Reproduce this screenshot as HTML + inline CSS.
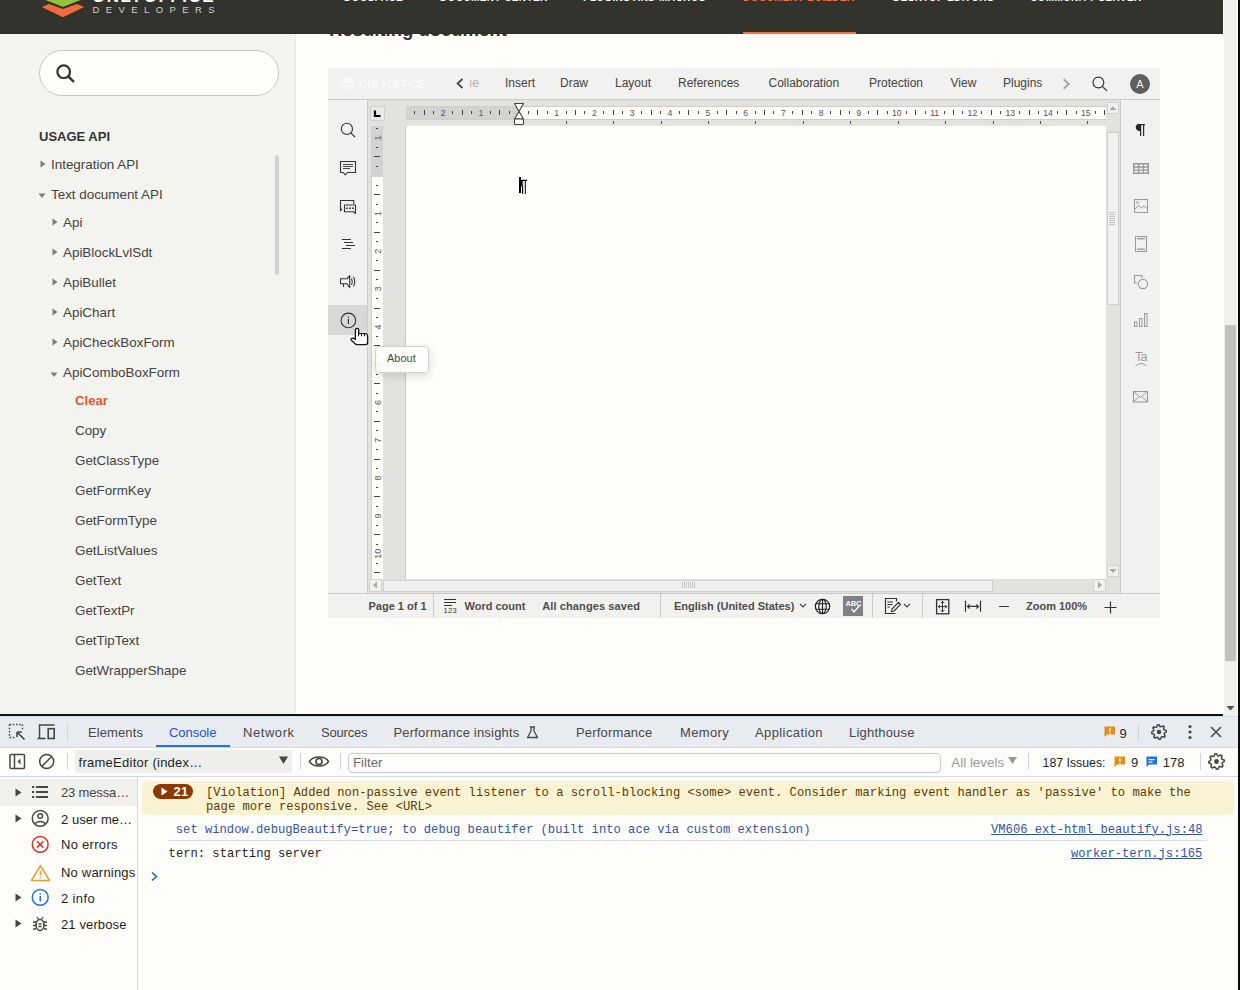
<!DOCTYPE html>
<html><head><meta charset="utf-8"><title>ONLYOFFICE API</title>
<style>
html,body{margin:0;padding:0;width:1240px;height:990px;overflow:hidden;background:#fefdf9;}
.t{position:absolute;white-space:pre;}
.r{position:absolute;display:block;}
</style></head><body>
<div class="t" style="left:329px;top:21.24px;font-size:18.5px;line-height:18.5px;color:#333330;font-weight:bold;font-family:'Liberation Sans', sans-serif;">Resulting document</div>
<div class="r" style="left:0px;top:0px;width:1223px;height:34px;background:#33332e;"></div>
<div class="r" style="left:0px;top:33px;width:1223px;height:1px;background:#2b2b27;"></div>
<svg class="r" style="left:40px;top:0px;" width="48" height="20" viewBox="0 0 48 20">
<path d="M2.3,7.3 Q2,6.9 3,6.6 L9,4 L23,9 L37,4 L43,6.6 Q44,6.9 43.7,7.3 L24,16.8 Q23,17.3 22,16.8 Z" fill="#f26b3a"/>
<path d="M5.5,0 L22,6.6 Q23,7 24,6.6 L40.5,0 Z" fill="#95c43d"/>
</svg>
<div class="t" style="left:92px;top:-12.39px;font-size:17px;line-height:17px;color:#ffffff;font-weight:bold;font-family:'Liberation Sans', sans-serif;letter-spacing:1.5px;">ONLYOFFICE</div>
<div class="t" style="left:92.5px;top:5.16px;font-size:9.5px;line-height:9.5px;color:#d2d2cc;font-weight:normal;font-family:'Liberation Sans', sans-serif;letter-spacing:6.4px;">DEVELOPERS</div>
<div class="t" style="left:344px;top:-7.37px;font-size:10px;line-height:10px;color:#ffffff;font-weight:bold;font-family:'Liberation Sans', sans-serif;letter-spacing:0.4px;">DOCSPACE</div>
<div class="t" style="left:440px;top:-7.37px;font-size:10px;line-height:10px;color:#ffffff;font-weight:bold;font-family:'Liberation Sans', sans-serif;letter-spacing:0.4px;">DOCUMENT CENTER</div>
<div class="t" style="left:583px;top:-7.37px;font-size:10px;line-height:10px;color:#ffffff;font-weight:bold;font-family:'Liberation Sans', sans-serif;letter-spacing:0.4px;">PLUGINS AND MACROS</div>
<div class="t" style="left:743px;top:-7.37px;font-size:10px;line-height:10px;color:#ff6f3d;font-weight:bold;font-family:'Liberation Sans', sans-serif;letter-spacing:0.4px;">DOCUMENT BUILDER</div>
<div class="t" style="left:893px;top:-7.37px;font-size:10px;line-height:10px;color:#ffffff;font-weight:bold;font-family:'Liberation Sans', sans-serif;letter-spacing:0.4px;">DESKTOP EDITORS</div>
<div class="t" style="left:1030px;top:-7.37px;font-size:10px;line-height:10px;color:#ffffff;font-weight:bold;font-family:'Liberation Sans', sans-serif;letter-spacing:0.4px;">COMMUNITY SERVER</div>
<div class="r" style="left:743px;top:32px;width:113px;height:2px;background:#ff6f3d;"></div>
<div class="r" style="left:1223px;top:0px;width:15px;height:717px;background:#fefdf9;"></div>
<div class="r" style="left:1224px;top:0px;width:13px;height:717px;background:#efefeb;"></div>
<div class="r" style="left:1225px;top:325px;width:11px;height:336px;background:#c1c1bd;"></div>
<svg class="r" style="left:1226px;top:704px;" width="10" height="8" viewBox="0 0 10 8"><path d="M0.5,2 L8.5,2 L4.5,6.5 Z" fill="#505050"/></svg>
<div class="r" style="left:1238px;top:0px;width:2px;height:990px;background:#0a0a0a;"></div>
<div class="r" style="left:0px;top:34px;width:296px;height:680px;background:#f3f3ef;"></div>
<div class="r" style="left:295px;top:34px;width:1px;height:680px;background:#e7e7e3;"></div>
<div class="r" style="left:39px;top:50px;width:240px;height:46px;background:#fefdf9;box-sizing:border-box;border:1px solid #c6c6c2;border-radius:23px;"></div>
<svg class="r" style="left:55px;top:63px;" width="22" height="22" viewBox="0 0 22 22"><circle cx="8.7" cy="8.7" r="6.3" fill="none" stroke="#333" stroke-width="2.2"/><path d="M13.3,13.3 L18.3,18.3" stroke="#333" stroke-width="2.4" stroke-linecap="round"/></svg>
<div class="t" style="left:39px;top:130.00px;font-size:13px;line-height:13px;color:#333;font-weight:bold;font-family:'Liberation Sans', sans-serif;">USAGE API</div>
<div class="r" style="left:275px;top:155px;width:4px;height:120px;background:#d0d3d6;border-radius:2px;"></div>
<svg class="r" style="left:39.5px;top:159.8px;" width="6" height="8" viewBox="0 0 6 8"><path d="M0.5,0.5 L5.5,4 L0.5,7.5 Z" fill="#7c7c78"/></svg>
<div class="t" style="left:51px;top:157.66px;font-size:13.4px;line-height:13.4px;color:#444440;font-weight:normal;font-family:'Liberation Sans', sans-serif;">Integration API</div>
<svg class="r" style="left:37.6px;top:193px;" width="8" height="6" viewBox="0 0 8 6"><path d="M0.5,0.5 L7.5,0.5 L4,5 Z" fill="#7c7c78"/></svg>
<div class="t" style="left:51px;top:187.66px;font-size:13.4px;line-height:13.4px;color:#444440;font-weight:normal;font-family:'Liberation Sans', sans-serif;">Text document API</div>
<svg class="r" style="left:52px;top:217.8px;" width="6" height="8" viewBox="0 0 6 8"><path d="M0.5,0.5 L5.5,4 L0.5,7.5 Z" fill="#7c7c78"/></svg>
<div class="t" style="left:63px;top:215.66px;font-size:13.4px;line-height:13.4px;color:#444440;font-weight:normal;font-family:'Liberation Sans', sans-serif;">Api</div>
<svg class="r" style="left:52px;top:247.8px;" width="6" height="8" viewBox="0 0 6 8"><path d="M0.5,0.5 L5.5,4 L0.5,7.5 Z" fill="#7c7c78"/></svg>
<div class="t" style="left:63px;top:245.66px;font-size:13.4px;line-height:13.4px;color:#444440;font-weight:normal;font-family:'Liberation Sans', sans-serif;">ApiBlockLvlSdt</div>
<svg class="r" style="left:52px;top:277.8px;" width="6" height="8" viewBox="0 0 6 8"><path d="M0.5,0.5 L5.5,4 L0.5,7.5 Z" fill="#7c7c78"/></svg>
<div class="t" style="left:63px;top:275.66px;font-size:13.4px;line-height:13.4px;color:#444440;font-weight:normal;font-family:'Liberation Sans', sans-serif;">ApiBullet</div>
<svg class="r" style="left:52px;top:307.8px;" width="6" height="8" viewBox="0 0 6 8"><path d="M0.5,0.5 L5.5,4 L0.5,7.5 Z" fill="#7c7c78"/></svg>
<div class="t" style="left:63px;top:305.66px;font-size:13.4px;line-height:13.4px;color:#444440;font-weight:normal;font-family:'Liberation Sans', sans-serif;">ApiChart</div>
<svg class="r" style="left:52px;top:337.8px;" width="6" height="8" viewBox="0 0 6 8"><path d="M0.5,0.5 L5.5,4 L0.5,7.5 Z" fill="#7c7c78"/></svg>
<div class="t" style="left:63px;top:335.66px;font-size:13.4px;line-height:13.4px;color:#444440;font-weight:normal;font-family:'Liberation Sans', sans-serif;">ApiCheckBoxForm</div>
<svg class="r" style="left:50px;top:372.4px;" width="8" height="6" viewBox="0 0 8 6"><path d="M0.5,0.5 L7.5,0.5 L4,5 Z" fill="#7c7c78"/></svg>
<div class="t" style="left:63px;top:365.66px;font-size:13.4px;line-height:13.4px;color:#444440;font-weight:normal;font-family:'Liberation Sans', sans-serif;">ApiComboBoxForm</div>
<div class="t" style="left:75px;top:393.83px;font-size:13.2px;line-height:13.2px;color:#e2582c;font-weight:bold;font-family:'Liberation Sans', sans-serif;">Clear</div>
<div class="t" style="left:75px;top:423.66px;font-size:13.4px;line-height:13.4px;color:#444440;font-weight:normal;font-family:'Liberation Sans', sans-serif;">Copy</div>
<div class="t" style="left:75px;top:453.66px;font-size:13.4px;line-height:13.4px;color:#444440;font-weight:normal;font-family:'Liberation Sans', sans-serif;">GetClassType</div>
<div class="t" style="left:75px;top:483.66px;font-size:13.4px;line-height:13.4px;color:#444440;font-weight:normal;font-family:'Liberation Sans', sans-serif;">GetFormKey</div>
<div class="t" style="left:75px;top:513.66px;font-size:13.4px;line-height:13.4px;color:#444440;font-weight:normal;font-family:'Liberation Sans', sans-serif;">GetFormType</div>
<div class="t" style="left:75px;top:543.66px;font-size:13.4px;line-height:13.4px;color:#444440;font-weight:normal;font-family:'Liberation Sans', sans-serif;">GetListValues</div>
<div class="t" style="left:75px;top:573.66px;font-size:13.4px;line-height:13.4px;color:#444440;font-weight:normal;font-family:'Liberation Sans', sans-serif;">GetText</div>
<div class="t" style="left:75px;top:603.66px;font-size:13.4px;line-height:13.4px;color:#444440;font-weight:normal;font-family:'Liberation Sans', sans-serif;">GetTextPr</div>
<div class="t" style="left:75px;top:633.66px;font-size:13.4px;line-height:13.4px;color:#444440;font-weight:normal;font-family:'Liberation Sans', sans-serif;">GetTipText</div>
<div class="t" style="left:75px;top:663.66px;font-size:13.4px;line-height:13.4px;color:#444440;font-weight:normal;font-family:'Liberation Sans', sans-serif;">GetWrapperShape</div>
<div class="r" style="left:0px;top:714px;width:1223px;height:2px;background:#111111;"></div>
<div class="r" style="left:328px;top:68px;width:832px;height:31px;background:#f1f1ef;"></div>
<div class="r" style="left:328px;top:99px;width:832px;height:1px;background:#cbcbc9;"></div>
<div class="r" style="left:328px;top:100px;width:39px;height:494px;background:#f1f1ef;"></div>
<div class="r" style="left:367px;top:100px;width:1px;height:494px;background:#cbcbc9;"></div>
<div class="r" style="left:368px;top:100px;width:752px;height:493px;background:#e2e2df;"></div>
<div class="r" style="left:1120px;top:100px;width:1px;height:494px;background:#cbcbc9;"></div>
<div class="r" style="left:1121px;top:100px;width:39px;height:494px;background:#f1f1ef;"></div>
<div class="r" style="left:328px;top:593px;width:832px;height:1px;background:#cbcbc9;"></div>
<div class="r" style="left:328px;top:594px;width:832px;height:24px;background:#f1f1ef;"></div>
<svg class="r" style="left:339px;top:76px;" width="17" height="16" viewBox="0 0 17 16"><path d="M8.3,1 L16,4.6 L8.3,8.2 L0.6,4.6 Z" fill="#fafaf8"/><path d="M0.8,8 L8.3,11.5 L15.8,8 M0.8,11 L8.3,14.5 L15.8,11" fill="none" stroke="#fafaf8" stroke-width="1.5"/></svg>
<div class="t" style="left:359px;top:78.69px;font-size:11px;line-height:11px;color:#fafaf8;font-weight:bold;font-family:'Liberation Sans', sans-serif;letter-spacing:-0.4px;">ONLYOFFICE</div>
<svg class="r" style="left:455px;top:78px;" width="10" height="12" viewBox="0 0 10 12"><path d="M7.5,1 L2.5,5.5 L7.5,10" fill="none" stroke="#444" stroke-width="1.7"/></svg>
<div class="t" style="left:469px;top:76.84px;font-size:12px;line-height:12px;color:#b0b0ae;font-weight:normal;font-family:'Liberation Sans', sans-serif;">ıe</div>
<div class="t" style="left:505px;top:76.84px;font-size:12px;line-height:12px;color:#444442;font-weight:normal;font-family:'Liberation Sans', sans-serif;">Insert</div>
<div class="t" style="left:560px;top:76.84px;font-size:12px;line-height:12px;color:#444442;font-weight:normal;font-family:'Liberation Sans', sans-serif;">Draw</div>
<div class="t" style="left:615px;top:76.84px;font-size:12px;line-height:12px;color:#444442;font-weight:normal;font-family:'Liberation Sans', sans-serif;">Layout</div>
<div class="t" style="left:678px;top:76.84px;font-size:12px;line-height:12px;color:#444442;font-weight:normal;font-family:'Liberation Sans', sans-serif;">References</div>
<div class="t" style="left:768.5px;top:76.84px;font-size:12px;line-height:12px;color:#444442;font-weight:normal;font-family:'Liberation Sans', sans-serif;">Collaboration</div>
<div class="t" style="left:869px;top:76.84px;font-size:12px;line-height:12px;color:#444442;font-weight:normal;font-family:'Liberation Sans', sans-serif;">Protection</div>
<div class="t" style="left:950.5px;top:76.84px;font-size:12px;line-height:12px;color:#444442;font-weight:normal;font-family:'Liberation Sans', sans-serif;">View</div>
<div class="t" style="left:1003px;top:76.84px;font-size:12px;line-height:12px;color:#444442;font-weight:normal;font-family:'Liberation Sans', sans-serif;">Plugins</div>
<svg class="r" style="left:1061px;top:77px;" width="12" height="14" viewBox="0 0 12 14"><path d="M2.6,2.2 L7.8,7 L2.6,11.8" fill="none" stroke="#a6a6a4" stroke-width="1.9"/></svg>
<svg class="r" style="left:1090px;top:75px;" width="20" height="18" viewBox="0 0 20 18"><circle cx="8.4" cy="7.5" r="5.4" fill="none" stroke="#333" stroke-width="1.15"/><path d="M12.2,11.4 L16.9,15.8" stroke="#333" stroke-width="1.2"/></svg>
<svg class="r" style="left:1130px;top:74px;" width="20" height="20" viewBox="0 0 20 20"><circle cx="10" cy="10" r="10" fill="#5e5e5c"/></svg>
<div class="t" style="left:1136.2px;top:78.69px;font-size:11px;line-height:11px;color:#f5f5f3;font-weight:normal;font-family:'Liberation Sans', sans-serif;">A</div>
<div class="r" style="left:370px;top:106px;width:15px;height:15px;background:#e9e9e7;box-sizing:border-box;border:1px solid #d0d0ce;"></div>
<svg class="r" style="left:373px;top:109px;" width="9" height="9" viewBox="0 0 9 9"><path d="M2,1.5 L2,7 L7.5,7" fill="none" stroke="#000" stroke-width="2.2"/></svg>
<div class="r" style="left:406px;top:106px;width:700px;height:14px;background:#fefdf9;"></div>
<div class="r" style="left:406px;top:106px;width:113px;height:14px;background:#d2d2d0;"></div>
<div class="r" style="left:406px;top:106px;width:700px;height:1px;background:#cdcdcb;"></div>
<div class="r" style="left:406px;top:119px;width:700px;height:1px;background:#cdcdcb;"></div>
<svg class="r" style="left:406px;top:106px;" width="700" height="14" viewBox="0 0 700 14"><rect x="8" y="5" width="1" height="3" fill="#444"/><rect x="18" y="4" width="1" height="5" fill="#444"/><rect x="27" y="5" width="1" height="3" fill="#444"/><text x="37.20" y="9.6" font-size="8.6" text-anchor="middle" fill="#555" font-family="Liberation Sans">2</text><rect x="46" y="5" width="1" height="3" fill="#444"/><rect x="56" y="4" width="1" height="5" fill="#444"/><rect x="65" y="5" width="1" height="3" fill="#444"/><text x="75.00" y="9.6" font-size="8.6" text-anchor="middle" fill="#555" font-family="Liberation Sans">1</text><rect x="84" y="5" width="1" height="3" fill="#444"/><rect x="93" y="4" width="1" height="5" fill="#444"/><rect x="103" y="5" width="1" height="3" fill="#444"/><rect x="122" y="5" width="1" height="3" fill="#444"/><rect x="131" y="4" width="1" height="5" fill="#444"/><rect x="141" y="5" width="1" height="3" fill="#444"/><text x="150.60" y="9.6" font-size="8.6" text-anchor="middle" fill="#555" font-family="Liberation Sans">1</text><rect x="160" y="5" width="1" height="3" fill="#444"/><rect x="169" y="4" width="1" height="5" fill="#444"/><rect x="178" y="5" width="1" height="3" fill="#444"/><text x="188.40" y="9.6" font-size="8.6" text-anchor="middle" fill="#555" font-family="Liberation Sans">2</text><rect x="197" y="5" width="1" height="3" fill="#444"/><rect x="207" y="4" width="1" height="5" fill="#444"/><rect x="216" y="5" width="1" height="3" fill="#444"/><text x="226.20" y="9.6" font-size="8.6" text-anchor="middle" fill="#555" font-family="Liberation Sans">3</text><rect x="235" y="5" width="1" height="3" fill="#444"/><rect x="245" y="4" width="1" height="5" fill="#444"/><rect x="254" y="5" width="1" height="3" fill="#444"/><text x="264.00" y="9.6" font-size="8.6" text-anchor="middle" fill="#555" font-family="Liberation Sans">4</text><rect x="273" y="5" width="1" height="3" fill="#444"/><rect x="282" y="4" width="1" height="5" fill="#444"/><rect x="292" y="5" width="1" height="3" fill="#444"/><text x="301.80" y="9.6" font-size="8.6" text-anchor="middle" fill="#555" font-family="Liberation Sans">5</text><rect x="311" y="5" width="1" height="3" fill="#444"/><rect x="320" y="4" width="1" height="5" fill="#444"/><rect x="330" y="5" width="1" height="3" fill="#444"/><text x="339.60" y="9.6" font-size="8.6" text-anchor="middle" fill="#555" font-family="Liberation Sans">6</text><rect x="349" y="5" width="1" height="3" fill="#444"/><rect x="358" y="4" width="1" height="5" fill="#444"/><rect x="367" y="5" width="1" height="3" fill="#444"/><text x="377.40" y="9.6" font-size="8.6" text-anchor="middle" fill="#555" font-family="Liberation Sans">7</text><rect x="386" y="5" width="1" height="3" fill="#444"/><rect x="396" y="4" width="1" height="5" fill="#444"/><rect x="405" y="5" width="1" height="3" fill="#444"/><text x="415.20" y="9.6" font-size="8.6" text-anchor="middle" fill="#555" font-family="Liberation Sans">8</text><rect x="424" y="5" width="1" height="3" fill="#444"/><rect x="434" y="4" width="1" height="5" fill="#444"/><rect x="443" y="5" width="1" height="3" fill="#444"/><text x="453.00" y="9.6" font-size="8.6" text-anchor="middle" fill="#555" font-family="Liberation Sans">9</text><rect x="462" y="5" width="1" height="3" fill="#444"/><rect x="471" y="4" width="1" height="5" fill="#444"/><rect x="481" y="5" width="1" height="3" fill="#444"/><text x="490.80" y="9.6" font-size="8.6" text-anchor="middle" fill="#555" font-family="Liberation Sans">10</text><rect x="500" y="5" width="1" height="3" fill="#444"/><rect x="509" y="4" width="1" height="5" fill="#444"/><rect x="519" y="5" width="1" height="3" fill="#444"/><text x="528.60" y="9.6" font-size="8.6" text-anchor="middle" fill="#555" font-family="Liberation Sans">11</text><rect x="538" y="5" width="1" height="3" fill="#444"/><rect x="547" y="4" width="1" height="5" fill="#444"/><rect x="556" y="5" width="1" height="3" fill="#444"/><text x="566.40" y="9.6" font-size="8.6" text-anchor="middle" fill="#555" font-family="Liberation Sans">12</text><rect x="575" y="5" width="1" height="3" fill="#444"/><rect x="585" y="4" width="1" height="5" fill="#444"/><rect x="594" y="5" width="1" height="3" fill="#444"/><text x="604.20" y="9.6" font-size="8.6" text-anchor="middle" fill="#555" font-family="Liberation Sans">13</text><rect x="613" y="5" width="1" height="3" fill="#444"/><rect x="623" y="4" width="1" height="5" fill="#444"/><rect x="632" y="5" width="1" height="3" fill="#444"/><text x="642.00" y="9.6" font-size="8.6" text-anchor="middle" fill="#555" font-family="Liberation Sans">14</text><rect x="651" y="5" width="1" height="3" fill="#444"/><rect x="660" y="4" width="1" height="5" fill="#444"/><rect x="670" y="5" width="1" height="3" fill="#444"/><text x="679.80" y="9.6" font-size="8.6" text-anchor="middle" fill="#555" font-family="Liberation Sans">15</text><rect x="689" y="5" width="1" height="3" fill="#444"/><rect x="698" y="4" width="1" height="5" fill="#444"/></svg>
<svg class="r" style="left:406px;top:121px;" width="700" height="3" viewBox="0 0 700 3"><rect x="160" y="0" width="1" height="3" fill="#555"/><rect x="207" y="0" width="1" height="3" fill="#555"/><rect x="255" y="0" width="1" height="3" fill="#555"/><rect x="302" y="0" width="1" height="3" fill="#555"/><rect x="349" y="0" width="1" height="3" fill="#555"/><rect x="397" y="0" width="1" height="3" fill="#555"/><rect x="444" y="0" width="1" height="3" fill="#555"/><rect x="492" y="0" width="1" height="3" fill="#555"/><rect x="539" y="0" width="1" height="3" fill="#555"/><rect x="587" y="0" width="1" height="3" fill="#555"/><rect x="634" y="0" width="1" height="3" fill="#555"/><rect x="681" y="0" width="1" height="3" fill="#555"/></svg>
<svg class="r" style="left:513px;top:102px;" width="12" height="24" viewBox="0 0 12 24"><path d="M1.5,1.5 L10.5,1.5 L6,9.5 Z M6,9.5 L10.5,17 L1.5,17 Z" fill="#fefdf9" stroke="#444" stroke-width="1.1" stroke-linejoin="round"/><rect x="1.5" y="17" width="9" height="5.5" rx="1" fill="#fefdf9" stroke="#444" stroke-width="1.1"/></svg>
<div class="r" style="left:371px;top:126px;width:1px;height:453px;background:#cfcfcd;"></div>
<div class="r" style="left:372px;top:126px;width:11px;height:453px;background:#fefdf9;"></div>
<div class="r" style="left:372px;top:126px;width:11px;height:51px;background:#d2d2d0;"></div>
<svg class="r" style="left:372px;top:126px;" width="11" height="453" viewBox="0 0 11 453"><rect x="4" y="2" width="2" height="1" fill="#444"/><text transform="translate(8.6,11.90) rotate(-90)" font-size="9" text-anchor="middle" fill="#555" font-family="Liberation Sans">1</text><rect x="4" y="21" width="2" height="1" fill="#444"/><rect x="2" y="30" width="6" height="1" fill="#444"/><rect x="4" y="40" width="2" height="1" fill="#444"/><rect x="4" y="59" width="2" height="1" fill="#444"/><rect x="2" y="68" width="6" height="1" fill="#444"/><rect x="4" y="78" width="2" height="1" fill="#444"/><text transform="translate(8.6,87.50) rotate(-90)" font-size="9" text-anchor="middle" fill="#555" font-family="Liberation Sans">1</text><rect x="4" y="96" width="2" height="1" fill="#444"/><rect x="2" y="106" width="6" height="1" fill="#444"/><rect x="4" y="115" width="2" height="1" fill="#444"/><text transform="translate(8.6,125.30) rotate(-90)" font-size="9" text-anchor="middle" fill="#555" font-family="Liberation Sans">2</text><rect x="4" y="134" width="2" height="1" fill="#444"/><rect x="2" y="144" width="6" height="1" fill="#444"/><rect x="4" y="153" width="2" height="1" fill="#444"/><text transform="translate(8.6,163.10) rotate(-90)" font-size="9" text-anchor="middle" fill="#555" font-family="Liberation Sans">3</text><rect x="4" y="172" width="2" height="1" fill="#444"/><rect x="2" y="182" width="6" height="1" fill="#444"/><rect x="4" y="191" width="2" height="1" fill="#444"/><text transform="translate(8.6,200.90) rotate(-90)" font-size="9" text-anchor="middle" fill="#555" font-family="Liberation Sans">4</text><rect x="4" y="210" width="2" height="1" fill="#444"/><rect x="2" y="219" width="6" height="1" fill="#444"/><rect x="4" y="229" width="2" height="1" fill="#444"/><text transform="translate(8.6,238.70) rotate(-90)" font-size="9" text-anchor="middle" fill="#555" font-family="Liberation Sans">5</text><rect x="4" y="248" width="2" height="1" fill="#444"/><rect x="2" y="257" width="6" height="1" fill="#444"/><rect x="4" y="267" width="2" height="1" fill="#444"/><text transform="translate(8.6,276.50) rotate(-90)" font-size="9" text-anchor="middle" fill="#555" font-family="Liberation Sans">6</text><rect x="4" y="285" width="2" height="1" fill="#444"/><rect x="2" y="295" width="6" height="1" fill="#444"/><rect x="4" y="304" width="2" height="1" fill="#444"/><text transform="translate(8.6,314.30) rotate(-90)" font-size="9" text-anchor="middle" fill="#555" font-family="Liberation Sans">7</text><rect x="4" y="323" width="2" height="1" fill="#444"/><rect x="2" y="333" width="6" height="1" fill="#444"/><rect x="4" y="342" width="2" height="1" fill="#444"/><text transform="translate(8.6,352.10) rotate(-90)" font-size="9" text-anchor="middle" fill="#555" font-family="Liberation Sans">8</text><rect x="4" y="361" width="2" height="1" fill="#444"/><rect x="2" y="370" width="6" height="1" fill="#444"/><rect x="4" y="380" width="2" height="1" fill="#444"/><text transform="translate(8.6,389.90) rotate(-90)" font-size="9" text-anchor="middle" fill="#555" font-family="Liberation Sans">9</text><rect x="4" y="399" width="2" height="1" fill="#444"/><rect x="2" y="408" width="6" height="1" fill="#444"/><rect x="4" y="418" width="2" height="1" fill="#444"/><text transform="translate(8.6,427.70) rotate(-90)" font-size="9" text-anchor="middle" fill="#555" font-family="Liberation Sans">10</text><rect x="4" y="437" width="2" height="1" fill="#444"/><rect x="2" y="446" width="6" height="1" fill="#444"/></svg>
<div class="r" style="left:405px;top:126px;width:1px;height:453px;background:#c8c8c6;"></div>
<div class="r" style="left:406px;top:126px;width:700px;height:453px;background:#fefdf9;"></div>
<div class="r" style="left:519px;top:177px;width:2px;height:16px;background:#000;"></div>
<svg class="r" style="left:520px;top:179px;" width="9" height="15" viewBox="0 0 9 15"><path d="M7,1.3 L2.2,1.3 C0.6,1.3 0.3,3 0.3,4.2 C0.3,5.6 1,7 2.6,7 L2.6,14.8" fill="none" stroke="#000" stroke-width="1.2"/><path d="M1,1.5 L2.6,1.5 L2.6,6.8 C1,6.8 0.5,5.5 0.5,4.2 Z" fill="#000"/><path d="M5.2,1.3 L5.2,14.8" stroke="#000" stroke-width="1.2"/><rect x="3" y="2" width="1.8" height="12" fill="#ddd"/></svg>
<div class="r" style="left:1106px;top:100px;width:14px;height:493px;background:#e2e2df;"></div>
<div class="r" style="left:1107px;top:102px;width:12px;height:12px;background:#f1f1ef;box-sizing:border-box;border:1px solid #d2d2d0;"></div>
<svg class="r" style="left:1107px;top:102px;" width="12" height="12" viewBox="0 0 12 12"><path d="M2.5,8 L9.5,8 L6,4 Z" fill="#a8a8a6"/></svg>
<div class="r" style="left:1106.5px;top:132px;width:12px;height:173px;background:#f1f1ef;box-sizing:border-box;border:1px solid #cfcfcd;"></div>
<svg class="r" style="left:1109px;top:212px;" width="7" height="14" viewBox="0 0 7 14"><rect x="0" y="0" width="6" height="1" fill="#c4c4c2"/><rect x="0" y="2" width="6" height="1" fill="#c4c4c2"/><rect x="0" y="4" width="6" height="1" fill="#c4c4c2"/><rect x="0" y="6" width="6" height="1" fill="#c4c4c2"/><rect x="0" y="8" width="6" height="1" fill="#c4c4c2"/><rect x="0" y="10" width="6" height="1" fill="#c4c4c2"/><rect x="0" y="12" width="6" height="1" fill="#c4c4c2"/></svg>
<div class="r" style="left:1107px;top:565px;width:12px;height:12px;background:#f1f1ef;box-sizing:border-box;border:1px solid #d2d2d0;"></div>
<svg class="r" style="left:1107px;top:565px;" width="12" height="12" viewBox="0 0 12 12"><path d="M2.5,4 L9.5,4 L6,8 Z" fill="#a8a8a6"/></svg>
<div class="r" style="left:368px;top:579px;width:752px;height:14px;background:#e2e2df;"></div>
<div class="r" style="left:369px;top:579px;width:13px;height:13px;background:#f1f1ef;box-sizing:border-box;border:1px solid #d2d2d0;"></div>
<svg class="r" style="left:369px;top:579px;" width="13" height="13" viewBox="0 0 13 13"><path d="M8,2.5 L8,9.5 L4,6 Z" fill="#a8a8a6"/></svg>
<div class="r" style="left:383px;top:579.5px;width:610px;height:12px;background:#f1f1ef;box-sizing:border-box;border:1px solid #cfcfcd;"></div>
<svg class="r" style="left:682px;top:582px;" width="14" height="7" viewBox="0 0 14 7"><rect x="0" y="0" width="1" height="6" fill="#c4c4c2"/><rect x="2" y="0" width="1" height="6" fill="#c4c4c2"/><rect x="4" y="0" width="1" height="6" fill="#c4c4c2"/><rect x="6" y="0" width="1" height="6" fill="#c4c4c2"/><rect x="8" y="0" width="1" height="6" fill="#c4c4c2"/><rect x="10" y="0" width="1" height="6" fill="#c4c4c2"/><rect x="12" y="0" width="1" height="6" fill="#c4c4c2"/></svg>
<div class="r" style="left:1093px;top:579px;width:13px;height:13px;background:#f1f1ef;box-sizing:border-box;border:1px solid #d2d2d0;"></div>
<svg class="r" style="left:1093px;top:579px;" width="13" height="13" viewBox="0 0 13 13"><path d="M5,2.5 L5,9.5 L9,6 Z" fill="#a8a8a6"/></svg>
<svg class="r" style="left:338px;top:120px;" width="20" height="20" viewBox="0 0 20 20"><circle cx="8.9" cy="8.9" r="5.6" fill="none" stroke="#333" stroke-width="1.1"/><path d="M12.8,12.8 L17,17" stroke="#333" stroke-width="1.2"/></svg>
<svg class="r" style="left:338px;top:159px;" width="20" height="18" viewBox="0 0 20 18"><path d="M2.5,2.5 L17.5,2.5 L17.5,13.5 L9.4,13.5 L7.3,15.8 L5.2,13.5 L2.5,13.5 Z" fill="none" stroke="#333" stroke-width="1.1" stroke-linejoin="round"/><path d="M5,5.5 H15 M5,7.5 H15 M5,9.5 H12" stroke="#333" stroke-width="0.9"/></svg>
<svg class="r" style="left:338px;top:198px;" width="20" height="18" viewBox="0 0 20 18"><path d="M15.8,6 L15.8,2.5 L2.5,2.5 L2.5,12.5 L4.2,10.8" fill="none" stroke="#333" stroke-width="1.1"/><path d="M6.5,7 L17.5,7 L17.5,15.5 L15.8,13.8 L6.5,13.8 Z" fill="none" stroke="#333" stroke-width="1.1" stroke-linejoin="round"/><path d="M7.9,10.3 H9.7 M11.1,10.3 H12.9 M14.2,10.3 H16" stroke="#333" stroke-width="1.6"/></svg>
<svg class="r" style="left:339px;top:236px;" width="18" height="16" viewBox="0 0 18 16"><path d="M2.9,3.5 H12 M5,6.5 H13.9 M7,9.5 H16.1 M2.9,12.5 H12" stroke="#333" stroke-width="1.1"/></svg>
<svg class="r" style="left:338px;top:273px;" width="20" height="18" viewBox="0 0 20 18"><path d="M2.5,5.8 L9,5.8 L11.7,2.5 L11.7,14.8 L9,10.8 L2.5,10.8 Z" fill="none" stroke="#333" stroke-width="1.1" stroke-linejoin="round"/><path d="M5.5,10.8 L5.5,14" stroke="#333" stroke-width="1.1"/><path d="M13.5,5.5 Q15,8.6 13.5,11.8 M15.5,3.8 Q18,8.6 15.5,13.5" fill="none" stroke="#333" stroke-width="1.1"/></svg>
<div class="r" style="left:328px;top:305px;width:39px;height:30px;background:#d8d8d6;"></div>
<svg class="r" style="left:338px;top:310px;" width="20" height="20" viewBox="0 0 20 20"><circle cx="10.4" cy="10.4" r="7.3" fill="none" stroke="#333" stroke-width="1.1"/><rect x="9.8" y="9" width="1.2" height="5" fill="#333"/><rect x="9.8" y="6.6" width="1.2" height="1.2" fill="#333"/></svg>
<svg class="r" style="left:349px;top:326px;" width="22" height="22" viewBox="0 0 22 22"><path d="M6.4,13.3 L6.4,3.9 Q6.4,2.3 8.05,2.3 Q9.7,2.3 9.7,3.9 L9.7,7.3 L16.8,7.6 Q18.6,7.9 18.6,9.8 L18.6,16.6 Q18.6,18.6 16.5,18.6 L7.1,18.6 L2.3,14.2 Q1.5,13.2 2.6,12.5 Q4.2,11.8 6.4,13.3 Z" fill="#fff" stroke="#161616" stroke-width="1.35" stroke-linejoin="round"/><path d="M9.6,7.4 V10.2 M12.5,7.6 V10.2 M15.5,7.7 V10.2" stroke="#161616" stroke-width="1.1"/></svg>
<div class="r" style="left:374.5px;top:345.5px;width:54px;height:27px;background:rgba(254,254,250,0.9);box-sizing:border-box;border:1px solid #d2d2d0;border-radius:4px;box-shadow:1px 3px 8px rgba(0,0,0,0.13);"></div>
<div class="t" style="left:387px;top:352.69px;font-size:11px;line-height:11px;color:#4a4a48;font-weight:normal;font-family:'Liberation Sans', sans-serif;">About</div>
<svg class="r" style="left:1134px;top:122px;" width="14" height="16" viewBox="0 0 14 16"><path d="M6.6,2 L4.6,2 C2.6,2 1.8,3.5 1.8,5.3 C1.8,7.3 3,8.9 4.8,8.9 L6.6,8.9 Z" fill="#2a2a2a"/><rect x="4" y="2" width="7" height="1.2" fill="#2a2a2a"/><rect x="6" y="2" width="1.2" height="12" fill="#2a2a2a"/><rect x="9" y="2" width="1.2" height="12" fill="#2a2a2a"/></svg>
<svg class="r" style="left:1133px;top:163px;" width="16" height="11" viewBox="0 0 16 11"><rect x="0.75" y="0.75" width="14.5" height="9.5" fill="none" stroke="#9a9a98" stroke-width="1.5"/><path d="M0.75,4 H15.25 M0.75,7.1 H15.25 M5.6,0.75 V10.25 M10.4,0.75 V10.25" stroke="#9a9a98" stroke-width="1.3"/></svg>
<svg class="r" style="left:1133px;top:198px;" width="16" height="16" viewBox="0 0 16 16"><rect x="1.5" y="1.5" width="13" height="13" fill="none" stroke="#9a9a98" stroke-width="1"/><circle cx="4.5" cy="4.5" r="1.1" fill="none" stroke="#9a9a98" stroke-width="0.9"/><path d="M1.5,11.5 L5.5,7.5 L8.5,10 L11,8 L14.5,10.5" fill="none" stroke="#9a9a98" stroke-width="1"/></svg>
<svg class="r" style="left:1134px;top:235px;" width="14" height="18" viewBox="0 0 14 18"><rect x="1.5" y="1.5" width="11" height="15" fill="none" stroke="#9a9a98" stroke-width="1"/><rect x="3" y="3" width="8" height="1.4" fill="#9a9a98"/><rect x="3" y="13.5" width="8" height="1.4" fill="#9a9a98"/></svg>
<svg class="r" style="left:1133px;top:274px;" width="16" height="16" viewBox="0 0 16 16"><path d="M9,4 L9,1.5 L1.5,1.5 L1.5,9 L4,9" fill="none" stroke="#9a9a98" stroke-width="1.1"/><circle cx="10" cy="10" r="4.6" fill="none" stroke="#9a9a98" stroke-width="1.1"/></svg>
<svg class="r" style="left:1133px;top:312px;" width="16" height="16" viewBox="0 0 16 16"><rect x="1.5" y="10" width="2.5" height="4.5" fill="none" stroke="#9a9a98" stroke-width="1"/><rect x="6.5" y="6.5" width="2.5" height="8" fill="none" stroke="#9a9a98" stroke-width="1"/><rect x="11.5" y="1.5" width="2.5" height="13" fill="none" stroke="#9a9a98" stroke-width="1"/></svg>
<div class="t" style="left:1135px;top:351.42px;font-size:12.5px;line-height:12.5px;color:#9a9a98;font-weight:normal;font-family:'Liberation Sans', sans-serif;letter-spacing:-0.8px;">Ta</div>
<svg class="r" style="left:1134px;top:362px;" width="14" height="5" viewBox="0 0 14 5"><path d="M1.5,4 Q7,-1 12.5,4" fill="none" stroke="#9a9a98" stroke-width="1"/></svg>
<svg class="r" style="left:1132px;top:390px;" width="18" height="13" viewBox="0 0 18 13"><rect x="1.5" y="1.5" width="14" height="10.5" fill="none" stroke="#9a9a98" stroke-width="1.1"/><path d="M1.5,1.5 L8.5,7.5 L15.5,1.5 M1.5,12 L6.5,7 M15.5,12 L10.5,7" fill="none" stroke="#9a9a98" stroke-width="1"/></svg>
<div class="t" style="left:368.5px;top:600.69px;font-size:11px;line-height:11px;color:#4d4d4b;font-weight:bold;font-family:'Liberation Sans', sans-serif;">Page 1 of 1</div>
<div class="r" style="left:433px;top:594px;width:1px;height:24px;background:#cbcbc9;"></div>
<svg class="r" style="left:443px;top:598px;" width="14" height="16" viewBox="0 0 14 16"><path d="M1,1.5 H13 M1,4.5 H13 M1,7.5 H9" stroke="#333" stroke-width="1"/></svg>
<div class="t" style="left:443.5px;top:607.15px;font-size:7.5px;line-height:7.5px;color:#333;font-weight:normal;font-family:'Liberation Sans', sans-serif;letter-spacing:0.3px;">123</div>
<div class="t" style="left:464.5px;top:600.69px;font-size:11px;line-height:11px;color:#4d4d4b;font-weight:bold;font-family:'Liberation Sans', sans-serif;">Word count</div>
<div class="t" style="left:542.3px;top:600.69px;font-size:11px;line-height:11px;color:#4d4d4b;font-weight:bold;font-family:'Liberation Sans', sans-serif;letter-spacing:0.1px;">All changes saved</div>
<div class="r" style="left:660px;top:594px;width:1px;height:24px;background:#cbcbc9;"></div>
<div class="t" style="left:674px;top:600.69px;font-size:11px;line-height:11px;color:#4d4d4b;font-weight:bold;font-family:'Liberation Sans', sans-serif;">English (United States)</div>
<svg class="r" style="left:799px;top:603px;" width="8" height="6" viewBox="0 0 8 6"><path d="M1,1 L4,4 L7,1" fill="none" stroke="#444" stroke-width="1.1"/></svg>
<svg class="r" style="left:814px;top:598px;" width="17" height="17" viewBox="0 0 17 17"><circle cx="8.5" cy="8.5" r="7.2" fill="none" stroke="#222" stroke-width="1.2"/><ellipse cx="8.5" cy="8.5" rx="3.7" ry="7.2" fill="none" stroke="#222" stroke-width="1.1"/><path d="M8.5,1.3 V15.7 M1.8,5.8 H15.2 M1.8,11.2 H15.2" stroke="#222" stroke-width="1.1"/></svg>
<div class="r" style="left:843px;top:596px;width:20px;height:20px;background:#7e8184;"></div>
<div class="t" style="left:845.5px;top:600.15px;font-size:7.5px;line-height:7.5px;color:#fefdf9;font-weight:bold;font-family:'Liberation Sans', sans-serif;letter-spacing:-0.2px;">ABC</div>
<svg class="r" style="left:843px;top:596px;" width="20" height="20" viewBox="0 0 20 20"><path d="M8.5,13 L11,16 L17,9" fill="none" stroke="#fefdf9" stroke-width="1.2"/></svg>
<div class="r" style="left:872px;top:594px;width:1px;height:24px;background:#cbcbc9;"></div>
<svg class="r" style="left:884px;top:597px;" width="18" height="18" viewBox="0 0 18 18"><path d="M11.5,16.5 L1.5,16.5 L1.5,1.5 L12.5,1.5 L12.5,4.5" fill="none" stroke="#333" stroke-width="1.2"/><path d="M3.5,5 H9 M3.5,7.5 H8.5 M3.5,10 H6" stroke="#333" stroke-width="1.1"/><path d="M7.5,14.8 L8,12 L14.5,5.3 L16.5,7.3 L10,14 Z" fill="none" stroke="#333" stroke-width="1.1" stroke-linejoin="round"/></svg>
<svg class="r" style="left:903px;top:603px;" width="8" height="6" viewBox="0 0 8 6"><path d="M1,1 L4,4 L7,1" fill="none" stroke="#444" stroke-width="1.1"/></svg>
<div class="r" style="left:922px;top:594px;width:1px;height:24px;background:#cbcbc9;"></div>
<svg class="r" style="left:935px;top:598px;" width="16" height="17" viewBox="0 0 16 17"><rect x="1.6" y="1.6" width="12.2" height="14.2" fill="none" stroke="#333" stroke-width="1.3"/><path d="M7.5,3.3 V14 M3.3,8.6 H11.8 M5.8,5 L7.5,3.3 L9.2,5 M5.8,12.2 L7.5,13.9 L9.2,12.2 M5,6.9 L3.3,8.6 L5,10.3 M10.1,6.9 L11.8,8.6 L10.1,10.3" fill="none" stroke="#333" stroke-width="1"/></svg>
<svg class="r" style="left:963px;top:599px;" width="20" height="15" viewBox="0 0 20 15"><path d="M2.5,1.8 V12.7 M17.5,1.8 V12.7" stroke="#333" stroke-width="1.2"/><path d="M4.5,7.4 H15.5 M6.6,5.3 L4.5,7.4 L6.6,9.5 M13.4,5.3 L15.5,7.4 L13.4,9.5" fill="none" stroke="#333" stroke-width="1.1"/></svg>
<div class="r" style="left:999px;top:606px;width:10px;height:1.2px;background:#333;"></div>
<div class="t" style="left:1026px;top:600.69px;font-size:11px;line-height:11px;color:#4d4d4b;font-weight:bold;font-family:'Liberation Sans', sans-serif;">Zoom 100%</div>
<svg class="r" style="left:1104px;top:601px;" width="13" height="13" viewBox="0 0 13 13"><path d="M6.5,0.5 V12.5 M0.5,6.5 H12.5" stroke="#333" stroke-width="1.2"/></svg>
<div class="r" style="left:0px;top:716px;width:1238px;height:1px;background:#d3dbe6;"></div>
<div class="r" style="left:0px;top:717px;width:1238px;height:30px;background:#e8ecf1;"></div>
<div class="r" style="left:0px;top:747px;width:1238px;height:1px;background:#d3dbe6;"></div>
<div class="r" style="left:0px;top:748px;width:1238px;height:28px;background:#fefdf9;"></div>
<div class="r" style="left:0px;top:776px;width:1238px;height:1px;background:#d3dbe6;"></div>
<div class="r" style="left:0px;top:777px;width:1238px;height:213px;background:#fefdf9;"></div>
<svg class="r" style="left:8px;top:723px;" width="18" height="18" viewBox="0 0 18 18"><path d="M1.5,1.5 H14.5 M1.5,1.5 V14.5 M14.5,1.5 V7 M1.5,14.5 H7" fill="none" stroke="#474747" stroke-width="1.5" stroke-dasharray="1.6,1.6"/><path d="M16.5,16.5 L9,9 M9,9 L9,14 M9,9 L14,9" fill="none" stroke="#474747" stroke-width="1.6"/></svg>
<svg class="r" style="left:37px;top:723px;" width="20" height="18" viewBox="0 0 20 18"><path d="M2.5,15.5 V2 H17.5" fill="none" stroke="#474747" stroke-width="1.5"/><path d="M0.5,15.5 H8.5" stroke="#474747" stroke-width="1.6"/><rect x="11.2" y="5.7" width="6" height="9.8" fill="none" stroke="#474747" stroke-width="1.6"/></svg>
<div class="r" style="left:67px;top:724px;width:1px;height:17px;background:#ccd4de;"></div>
<div class="t" style="left:88px;top:726.00px;font-size:13px;line-height:13px;color:#474747;font-weight:normal;font-family:'Liberation Sans', sans-serif;letter-spacing:0.100px;">Elements</div>
<div class="t" style="left:169px;top:726.00px;font-size:13px;line-height:13px;color:#1a56c4;font-weight:normal;font-family:'Liberation Sans', sans-serif;letter-spacing:-0.043px;">Console</div>
<div class="t" style="left:243px;top:726.00px;font-size:13px;line-height:13px;color:#474747;font-weight:normal;font-family:'Liberation Sans', sans-serif;letter-spacing:0.559px;">Network</div>
<div class="t" style="left:321px;top:726.00px;font-size:13px;line-height:13px;color:#474747;font-weight:normal;font-family:'Liberation Sans', sans-serif;letter-spacing:-0.186px;">Sources</div>
<div class="t" style="left:393.5px;top:726.00px;font-size:13px;line-height:13px;color:#474747;font-weight:normal;font-family:'Liberation Sans', sans-serif;letter-spacing:0.194px;">Performance insights</div>
<div class="t" style="left:576px;top:726.00px;font-size:13px;line-height:13px;color:#474747;font-weight:normal;font-family:'Liberation Sans', sans-serif;letter-spacing:0.171px;">Performance</div>
<div class="t" style="left:680px;top:726.00px;font-size:13px;line-height:13px;color:#474747;font-weight:normal;font-family:'Liberation Sans', sans-serif;letter-spacing:0.341px;">Memory</div>
<div class="t" style="left:755px;top:726.00px;font-size:13px;line-height:13px;color:#474747;font-weight:normal;font-family:'Liberation Sans', sans-serif;letter-spacing:0.399px;">Application</div>
<div class="t" style="left:849px;top:726.00px;font-size:13px;line-height:13px;color:#474747;font-weight:normal;font-family:'Liberation Sans', sans-serif;letter-spacing:0.208px;">Lighthouse</div>
<div class="r" style="left:156px;top:745px;width:74px;height:2px;background:#1a73e8;"></div>
<svg class="r" style="left:526px;top:726px;" width="13" height="13" viewBox="0 0 13 13"><path d="M4,1 H9 M5,1 V5 L1.5,11.5 H11.5 L8,5 V1" fill="none" stroke="#474747" stroke-width="1.3" stroke-linejoin="round"/></svg>
<svg class="r" style="left:1104px;top:726px;" width="12" height="12" viewBox="0 0 12 12"><path d="M0.5,0.5 H11 V8.5 H3 L0.5,11 Z" fill="#e48f1a"/><rect x="5" y="2" width="1.5" height="4" fill="#fff"/><rect x="5" y="7" width="1.5" height="1.3" fill="#fff"/></svg>
<div class="t" style="left:1119.5px;top:727.00px;font-size:13px;line-height:13px;color:#1f1f1f;font-weight:normal;font-family:'Liberation Sans', sans-serif;">9</div>
<div class="r" style="left:1138px;top:724px;width:1px;height:17px;background:#ccd4de;"></div>
<svg class="r" style="left:1151px;top:723.5px;" width="16" height="16" viewBox="0 0 16 16"><path d="M15.21,6.54 L15.36,7.97 L13.50,9.07 L13.18,10.12 L14.13,12.07 L13.22,13.19 L11.13,12.64 L10.16,13.17 L9.46,15.21 L8.03,15.36 L6.93,13.50 L5.88,13.18 L3.93,14.13 L2.81,13.22 L3.36,11.13 L2.83,10.16 L0.79,9.46 L0.64,8.03 L2.50,6.93 L2.82,5.88 L1.87,3.93 L2.78,2.81 L4.87,3.36 L5.84,2.83 L6.54,0.79 L7.97,0.64 L9.07,2.50 L10.12,2.82 L12.07,1.87 L13.19,2.78 L12.64,4.87 L13.17,5.84 Z" fill="none" stroke="#474747" stroke-width="1.5" stroke-linejoin="round"/><circle cx="8.0" cy="8.0" r="2.24" fill="#474747"/></svg>
<svg class="r" style="left:1187px;top:724px;" width="6" height="16" viewBox="0 0 6 16"><circle cx="3" cy="2.5" r="1.6" fill="#474747"/><circle cx="3" cy="8" r="1.6" fill="#474747"/><circle cx="3" cy="13.5" r="1.6" fill="#474747"/></svg>
<svg class="r" style="left:1209px;top:725px;" width="14" height="14" viewBox="0 0 14 14"><path d="M2,2 L12,12 M12,2 L2,12" stroke="#474747" stroke-width="1.5"/></svg>
<svg class="r" style="left:8px;top:752px;" width="18" height="18" viewBox="0 0 18 18"><rect x="2" y="2.5" width="14.5" height="14" rx="1" fill="none" stroke="#474747" stroke-width="1.5"/><path d="M6.5,2.5 V16.5" stroke="#474747" stroke-width="1.5"/><path d="M12.5,6.5 L9.5,9.5 L12.5,12.5 Z" fill="#474747"/></svg>
<svg class="r" style="left:38px;top:753px;" width="18" height="18" viewBox="0 0 18 18"><circle cx="8.7" cy="8.5" r="7" fill="none" stroke="#474747" stroke-width="1.5"/><path d="M4,13.2 L13.5,3.8" stroke="#474747" stroke-width="1.5"/></svg>
<div class="r" style="left:67px;top:753px;width:1px;height:17px;background:#ccd4de;"></div>
<div class="r" style="left:75px;top:750px;width:217px;height:23px;background:#eeeeea;border-radius:3px;"></div>
<div class="t" style="left:78.6px;top:756.00px;font-size:13px;line-height:13px;color:#1f1f1f;font-weight:normal;font-family:'Liberation Sans', sans-serif;letter-spacing:0.252px;">frameEditor (index…</div>
<svg class="r" style="left:278px;top:755px;" width="11" height="10" viewBox="0 0 11 10"><path d="M1,1.5 H10 L5.5,9 Z" fill="#474747"/></svg>
<div class="r" style="left:300px;top:753px;width:1px;height:17px;background:#ccd4de;"></div>
<svg class="r" style="left:308px;top:754px;" width="22" height="15" viewBox="0 0 22 15"><path d="M1.5,7.5 C5,1.5 17,1.5 20.5,7.5 C17,13.5 5,13.5 1.5,7.5 Z" fill="none" stroke="#474747" stroke-width="1.6"/><circle cx="11" cy="7.5" r="3" fill="none" stroke="#474747" stroke-width="1.6"/></svg>
<div class="r" style="left:340px;top:753px;width:1px;height:17px;background:#ccd4de;"></div>
<div class="r" style="left:348px;top:752.5px;width:593px;height:20px;background:#fefdf9;box-sizing:border-box;border:1px solid #c7ccd2;border-radius:4px;"></div>
<div class="t" style="left:353px;top:755.74px;font-size:13.3px;line-height:13.3px;color:#6c6c6c;font-weight:normal;font-family:'Liberation Sans', sans-serif;">Filter</div>
<div class="t" style="left:951.3px;top:755.66px;font-size:13.4px;line-height:13.4px;color:#9a9a9a;font-weight:normal;font-family:'Liberation Sans', sans-serif;">All levels</div>
<svg class="r" style="left:1007px;top:756px;" width="11" height="9" viewBox="0 0 11 9"><path d="M1,1 H10 L5.5,8 Z" fill="#9a9a9a"/></svg>
<div class="r" style="left:1028px;top:753px;width:1px;height:17px;background:#ccd4de;"></div>
<div class="t" style="left:1042.6px;top:756.59px;font-size:12.3px;line-height:12.3px;color:#1f1f1f;font-weight:normal;font-family:'Liberation Sans', sans-serif;">187 Issues:</div>
<svg class="r" style="left:1114px;top:756px;" width="12" height="12" viewBox="0 0 12 12"><path d="M0.5,0.5 H11 V8.5 H3 L0.5,11 Z" fill="#e48f1a"/><rect x="5" y="2" width="1.5" height="4" fill="#fff"/><rect x="5" y="7" width="1.5" height="1.3" fill="#fff"/></svg>
<div class="t" style="left:1131px;top:756.00px;font-size:13px;line-height:13px;color:#1f1f1f;font-weight:normal;font-family:'Liberation Sans', sans-serif;">9</div>
<svg class="r" style="left:1146px;top:756px;" width="12" height="12" viewBox="0 0 12 12"><path d="M0.5,0.5 H11 V8.5 H3 L0.5,11 Z" fill="#1a73e8"/><rect x="2.5" y="3" width="6" height="1.2" fill="#fff"/><rect x="2.5" y="5.5" width="4" height="1.2" fill="#fff"/></svg>
<div class="t" style="left:1162.7px;top:756.00px;font-size:13px;line-height:13px;color:#1f1f1f;font-weight:normal;font-family:'Liberation Sans', sans-serif;">178</div>
<div class="r" style="left:1200px;top:753px;width:1px;height:17px;background:#ccd4de;"></div>
<svg class="r" style="left:1207.5px;top:753px;" width="17" height="17" viewBox="0 0 17 17"><path d="M16.16,6.95 L16.32,8.47 L14.34,9.64 L14.01,10.76 L15.02,12.82 L14.05,14.01 L11.82,13.44 L10.80,13.99 L10.05,16.16 L8.53,16.32 L7.36,14.34 L6.24,14.01 L4.18,15.02 L2.99,14.05 L3.56,11.82 L3.01,10.80 L0.84,10.05 L0.68,8.53 L2.66,7.36 L2.99,6.24 L1.98,4.18 L2.95,2.99 L5.18,3.56 L6.20,3.01 L6.95,0.84 L8.47,0.68 L9.64,2.66 L10.76,2.99 L12.82,1.98 L14.01,2.95 L13.44,5.18 L13.99,6.20 Z" fill="none" stroke="#474747" stroke-width="1.5" stroke-linejoin="round"/><circle cx="8.5" cy="8.5" r="2.38" fill="#474747"/></svg>
<div class="r" style="left:137px;top:777px;width:1px;height:213px;background:#d3dbe6;"></div>
<div class="r" style="left:0px;top:779px;width:137px;height:27px;background:#f0f0ec;"></div>
<svg class="r" style="left:14.5px;top:787.5px;" width="8" height="9" viewBox="0 0 8 9"><path d="M0.5,0.5 L6.5,4.5 L0.5,8.5 Z" fill="#474747"/></svg>
<svg class="r" style="left:31px;top:785px;" width="18" height="14" viewBox="0 0 18 14"><rect x="1" y="1" width="2.2" height="2" fill="#474747"/><rect x="1" y="6" width="2.2" height="2" fill="#474747"/><rect x="1" y="11" width="2.2" height="2" fill="#474747"/><rect x="5" y="1" width="12" height="2" fill="#474747"/><rect x="5" y="6" width="12" height="2" fill="#474747"/><rect x="5" y="11" width="12" height="2" fill="#474747"/></svg>
<div class="t" style="left:61px;top:786.00px;font-size:13px;line-height:13px;color:#474747;font-weight:normal;font-family:'Liberation Sans', sans-serif;letter-spacing:-0.153px;">23 messa…</div>
<svg class="r" style="left:14.5px;top:814px;" width="8" height="9" viewBox="0 0 8 9"><path d="M0.5,0.5 L6.5,4.5 L0.5,8.5 Z" fill="#474747"/></svg>
<svg class="r" style="left:31px;top:809px;" width="19" height="19" viewBox="0 0 19 19"><circle cx="9.2" cy="9.4" r="7.9" fill="none" stroke="#474747" stroke-width="1.5"/><circle cx="9.2" cy="7" r="2.3" fill="none" stroke="#474747" stroke-width="1.5"/><path d="M3.8,15 C6,11.5 12.5,11.5 14.6,15" fill="none" stroke="#474747" stroke-width="1.5"/></svg>
<div class="t" style="left:61px;top:812.60px;font-size:13px;line-height:13px;color:#1f1f1f;font-weight:normal;font-family:'Liberation Sans', sans-serif;letter-spacing:0.019px;">2 user me…</div>
<svg class="r" style="left:31px;top:835px;" width="19" height="19" viewBox="0 0 19 19"><circle cx="9.2" cy="9.4" r="7.9" fill="none" stroke="#d93025" stroke-width="1.5"/><path d="M6,6.2 L12.4,12.6 M12.4,6.2 L6,12.6" stroke="#d93025" stroke-width="1.5"/></svg>
<div class="t" style="left:61px;top:838.40px;font-size:13px;line-height:13px;color:#1f1f1f;font-weight:normal;font-family:'Liberation Sans', sans-serif;letter-spacing:0.290px;">No errors</div>
<svg class="r" style="left:30px;top:864px;" width="21" height="18" viewBox="0 0 21 18"><path d="M10.5,1.5 L19.5,16.5 H1.5 Z" fill="none" stroke="#e0a03a" stroke-width="1.5" stroke-linejoin="round"/><rect x="9.8" y="6.5" width="1.4" height="5" fill="#e0a03a"/><rect x="9.8" y="12.8" width="1.4" height="1.4" fill="#e0a03a"/></svg>
<div class="t" style="left:61px;top:865.80px;font-size:13px;line-height:13px;color:#1f1f1f;font-weight:normal;font-family:'Liberation Sans', sans-serif;letter-spacing:0.203px;">No warnings</div>
<svg class="r" style="left:14.5px;top:893px;" width="8" height="9" viewBox="0 0 8 9"><path d="M0.5,0.5 L6.5,4.5 L0.5,8.5 Z" fill="#474747"/></svg>
<svg class="r" style="left:31px;top:888px;" width="19" height="19" viewBox="0 0 19 19"><circle cx="9.2" cy="9.4" r="7.9" fill="none" stroke="#1a73e8" stroke-width="1.5"/><rect x="8.5" y="8" width="1.5" height="5.5" fill="#1a73e8"/><rect x="8.5" y="5.2" width="1.5" height="1.5" fill="#1a73e8"/></svg>
<div class="t" style="left:61px;top:891.70px;font-size:13px;line-height:13px;color:#1f1f1f;font-weight:normal;font-family:'Liberation Sans', sans-serif;letter-spacing:0.365px;">2 info</div>
<svg class="r" style="left:14.5px;top:919px;" width="8" height="9" viewBox="0 0 8 9"><path d="M0.5,0.5 L6.5,4.5 L0.5,8.5 Z" fill="#474747"/></svg>
<svg class="r" style="left:32px;top:916px;" width="16" height="16" viewBox="0 0 16 16"><path d="M5,1 L6.5,3.5 M11,1 L9.5,3.5" stroke="#474747" stroke-width="1.3"/><ellipse cx="8" cy="9" rx="4" ry="5.5" fill="none" stroke="#474747" stroke-width="1.6"/><path d="M1,6 H4 M12,6 H15 M1,9.5 H4 M12,9.5 H15 M1,13 H4 M12,13 H15 M6.5,8 H9.5 M6.5,10.5 H9.5" stroke="#474747" stroke-width="1.3"/></svg>
<div class="t" style="left:61px;top:917.50px;font-size:13px;line-height:13px;color:#1f1f1f;font-weight:normal;font-family:'Liberation Sans', sans-serif;letter-spacing:0.117px;">21 verbose</div>
<div class="r" style="left:142px;top:781px;width:1092px;height:34px;background:#faf3d3;border-radius:5px;"></div>
<div class="r" style="left:152.5px;top:784px;width:40.5px;height:15px;background:#8a3a00;border-radius:7.5px;"></div>
<svg class="r" style="left:161.3px;top:787px;" width="8" height="9" viewBox="0 0 8 9"><path d="M0.5,0.5 L6.5,4.5 L0.5,8.5 Z" fill="#fff"/></svg>
<div class="t" style="left:173.5px;top:785.00px;font-size:13px;line-height:13px;color:#ffffff;font-weight:bold;font-family:'Liberation Sans', sans-serif;letter-spacing:0.266px;">21</div>
<div class="t" style="left:206px;top:786.67px;font-size:12.17px;line-height:12.17px;color:#5c3b00;font-weight:normal;font-family:'Liberation Mono', monospace;">[Violation] Added non-passive event listener to a scroll-blocking &lt;some&gt; event. Consider marking event handler as &#39;passive&#39; to make the</div>
<div class="t" style="left:206px;top:801.07px;font-size:12.17px;line-height:12.17px;color:#5c3b00;font-weight:normal;font-family:'Liberation Mono', monospace;">page more responsive. See &lt;URL&gt;</div>
<div class="t" style="left:175.8px;top:823.67px;font-size:12.17px;line-height:12.17px;color:#3454a4;font-weight:normal;font-family:'Liberation Mono', monospace;">set window.debugBeautify=true; to debug beautifer (built into ace via custom extension)</div>
<div class="t" style="left:991px;top:823.67px;font-size:12.17px;line-height:12.17px;color:#3454a4;font-weight:normal;font-family:'Liberation Mono', monospace;text-decoration:underline;">VM606 ext-html_beautify.js:48</div>
<div class="r" style="left:168px;top:840px;width:1039px;height:1px;background:#d6dcea;"></div>
<div class="t" style="left:168.6px;top:847.67px;font-size:12.17px;line-height:12.17px;color:#1f1f1f;font-weight:normal;font-family:'Liberation Mono', monospace;">tern: starting server</div>
<div class="t" style="left:1071px;top:847.67px;font-size:12.17px;line-height:12.17px;color:#3454a4;font-weight:normal;font-family:'Liberation Mono', monospace;text-decoration:underline;">worker-tern.js:165</div>
<svg class="r" style="left:150px;top:871px;" width="9" height="11" viewBox="0 0 9 11"><path d="M2,1.5 L6.5,5.5 L2,9.5" fill="none" stroke="#1a56c4" stroke-width="1.4"/></svg>
</body></html>
